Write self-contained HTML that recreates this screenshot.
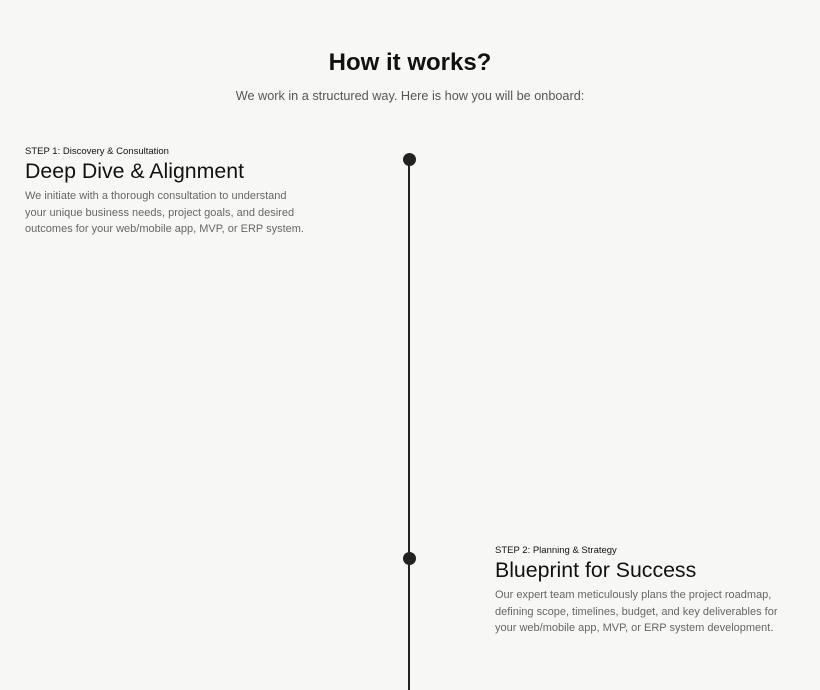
<!DOCTYPE html>
<html><head><style>
body{margin:0;width:820px;height:685px;background:#f7f8f6;font-family:"Liberation Sans",sans-serif;position:relative;overflow:hidden}
.t{position:absolute;left:0;width:820px;text-align:center}
h1{position:absolute;top:49px;left:0;width:820px;text-align:center;margin:0;font-size:24px;font-weight:bold;color:#111}
.sub{top:89px;font-size:12.7px;color:#555}
.line{position:absolute;left:408px;top:160px;width:2px;height:530px;background:#222}
.dot{position:absolute;width:13px;height:13px;border-radius:50%;background:#222}
.step{position:absolute;font-size:9.5px;color:#111}
.h{position:absolute;font-size:21.3px;color:#111;white-space:nowrap}
.p{position:absolute;font-size:11px;line-height:16.5px;color:#666;white-space:nowrap}
</style></head><body>
<h1>How it works?</h1>
<div class="t sub">We work in a structured way. Here is how you will be onboard:</div>
<div class="line"></div>
<div class="dot" style="left:402.5px;top:153px"></div>
<div class="dot" style="left:402.5px;top:552px"></div>
<div class="step" style="left:25px;top:146px">STEP 1: Discovery &amp; Consultation</div>
<div class="h" style="left:25px;top:159px">Deep Dive &amp; Alignment</div>
<div class="p" style="left:25px;top:188px">We initiate with a thorough consultation to understand<br>your unique business needs, project goals, and desired<br>outcomes for your web/mobile app, MVP, or ERP system.</div>
<div class="step" style="left:495px;top:545px">STEP 2: Planning &amp; Strategy</div>
<div class="h" style="left:495px;top:558px">Blueprint for Success</div>
<div class="p" style="left:495px;top:587px">Our expert team meticulously plans the project roadmap,<br>defining scope, timelines, budget, and key deliverables for<br>your web/mobile app, MVP, or ERP system development.</div>
</body></html>
